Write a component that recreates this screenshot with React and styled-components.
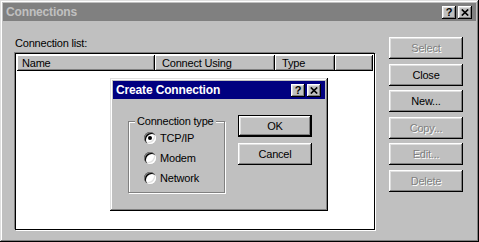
import styled, { createGlobalStyle } from 'styled-components';

const GlobalStyle = createGlobalStyle`
  html, body {
    margin: 0;
    padding: 0;
  }
  body {
    font-family: "Liberation Sans", Arial, sans-serif;
    font-size: 11px;
    letter-spacing: -0.2px;
    color: #000;
    background: #c0c0c0;
  }
`;

const raisedEdge = `
  box-shadow: inset -1px -1px 0 #000, inset 1px 1px 0 #fff,
    inset -2px -2px 0 #808080, inset 2px 2px 0 #dfdfdf;
`;

const Window = styled.div`
  position: relative;
  box-sizing: border-box;
  width: 479px;
  height: 242px;
  padding: 3px;
  display: flex;
  flex-direction: column;
  background: #c0c0c0;
  box-shadow: inset -1px -1px 0 #000, inset 1px 1px 0 #dfdfdf,
    inset -2px -2px 0 #808080, inset 2px 2px 0 #fff;
`;

const Dialog = styled(Window)`
  position: absolute;
  left: 110px;
  top: 78px;
  width: 218px;
  height: 133px;
`;

const TitleBar = styled.div`
  flex-shrink: 0;
  height: 18px;
  display: flex;
  align-items: center;
  justify-content: space-between;
  padding: 0 4px 0 3px;
  background: ${(p) => (p.$active ? '#000080' : '#808080')};
  color: ${(p) => (p.$active ? '#fff' : '#c0c0c0')};
  font-size: 12px;
  font-weight: bold;
  letter-spacing: -0.15px;
`;

const CaptionButtons = styled.div`
  display: flex;
  gap: 2px;
`;

const CaptionButton = styled.div`
  box-sizing: border-box;
  width: 14px;
  height: 13px;
  display: flex;
  align-items: center;
  justify-content: center;
  background: #c0c0c0;
  color: #000;
  font-size: 11px;
  font-weight: bold;
  letter-spacing: 0;
  ${raisedEdge}
`;

const Body = styled.div`
  flex: 1;
  display: flex;
  padding: 16px 0 9px 12px;
`;

const ListColumn = styled.div`
  width: 360px;
  display: flex;
  flex-direction: column;
`;

const Label = styled.div`
  height: 12px;
  line-height: 12px;
  margin-bottom: 4px;
`;

const ListBox = styled.div`
  flex: 1;
  box-sizing: border-box;
  padding: 1px;
  background: #fff;
  border: 1px solid #000;
  box-shadow: -1px -1px 0 #808080, 1px 1px 0 #fff;
`;

const HeaderRow = styled.div`
  display: flex;
  height: 16px;
`;

const HeaderCell = styled.div`
  box-sizing: border-box;
  width: ${(p) => (p.$width ? `${p.$width}px` : 'auto')};
  flex: ${(p) => (p.$width ? '0 0 auto' : '1')};
  padding-left: ${(p) => p.$pad}px;
  line-height: 16px;
  background: #c0c0c0;
  white-space: nowrap;
  box-shadow: inset -1px -1px 0 #000, inset 1px 1px 0 #fff, inset -2px -2px 0 #808080;
`;

const ButtonColumn = styled.div`
  display: flex;
  flex-direction: column;
  gap: ${(p) => p.$gap}px;
  margin-left: ${(p) => p.$offset}px;
`;

const Button = styled.button`
  box-sizing: border-box;
  width: 74px;
  height: 22px;
  margin: 0;
  padding: 0;
  font: inherit;
  letter-spacing: inherit;
  background: #c0c0c0;
  color: ${(p) => (p.disabled ? '#808080' : '#000')};
  text-shadow: ${(p) => (p.disabled ? '1px 1px 0 #fff' : 'none')};
  border: ${(p) => (p.$default ? '1px solid #000' : 'none')};
  ${raisedEdge}
`;

const DialogBody = styled.div`
  flex: 1;
  display: flex;
  align-items: flex-start;
  gap: 13px;
  padding: 16px 13px 0 15px;
`;

const GroupBox = styled.fieldset`
  box-sizing: border-box;
  width: 97px;
  height: 78px;
  margin: 0;
  padding: 0;
  border: 1px solid #808080;
  box-shadow: inset 1px 1px 0 #fff, 1px 1px 0 #fff;
`;

const GroupLegend = styled.legend`
  margin-left: 6px;
  padding: 0 2px;
  line-height: 13px;
  background: #c0c0c0;
`;

const RadioRow = styled.label`
  display: flex;
  align-items: center;
  gap: 4px;
  height: 20px;
  padding-left: 15px;
`;

const RadioMark = styled.span`
  position: relative;
  width: 12px;
  height: 12px;
  border-radius: 50%;
  background: #fff;
  box-shadow: inset 1px 1px 0 #808080, inset 2px 2px 0 #000,
    inset -1px -1px 0 #fff, inset -2px -2px 0 #dfdfdf;

  &::after {
    content: '';
    display: ${(p) => (p.$checked ? 'block' : 'none')};
    position: absolute;
    left: 4px;
    top: 4px;
    width: 4px;
    height: 4px;
    border-radius: 50%;
    background: #000;
  }
`;

function CloseGlyph() {
  return (
    <svg width="8" height="7" viewBox="0 0 8 7">
      <path d="M0.8 0.5 L7.2 6.5 M7.2 0.5 L0.8 6.5" stroke="#000" strokeWidth="1.7" />
    </svg>
  );
}

function Caption({ title, active }) {
  return (
    <TitleBar $active={active}>
      <span>{title}</span>
      <CaptionButtons>
        <CaptionButton>?</CaptionButton>
        <CaptionButton>
          <CloseGlyph />
        </CaptionButton>
      </CaptionButtons>
    </TitleBar>
  );
}

const sideButtons = [
  { label: 'Select', disabled: true },
  { label: 'Close' },
  { label: 'New...' },
  { label: 'Copy...', disabled: true },
  { label: 'Edit...', disabled: true },
  { label: 'Delete', disabled: true },
];

const connectionTypes = [
  { label: 'TCP/IP', checked: true },
  { label: 'Modem' },
  { label: 'Network' },
];

export default function App() {
  return (
    <>
      <GlobalStyle />
      <Window>
        <Caption title="Connections" />
        <Body>
          <ListColumn>
            <Label>Connection list:</Label>
            <ListBox>
              <HeaderRow>
                <HeaderCell $width={138} $pad={5}>Name</HeaderCell>
                <HeaderCell $width={120} $pad={7}>Connect Using</HeaderCell>
                <HeaderCell $width={60} $pad={7}>Type</HeaderCell>
                <HeaderCell />
              </HeaderRow>
            </ListBox>
          </ListColumn>
          <ButtonColumn $gap={4.6} $offset={14}>
            {sideButtons.map((b) => (
              <Button key={b.label} disabled={b.disabled}>
                {b.label}
              </Button>
            ))}
          </ButtonColumn>
        </Body>

        <Dialog>
          <Caption title="Create Connection" active />
          <DialogBody>
            <GroupBox>
              <GroupLegend>Connection type</GroupLegend>
              {connectionTypes.map((t) => (
                <RadioRow key={t.label}>
                  <RadioMark $checked={t.checked} />
                  {t.label}
                </RadioRow>
              ))}
            </GroupBox>
            <ButtonColumn $gap={6} $offset={0}>
              <Button $default>OK</Button>
              <Button>Cancel</Button>
            </ButtonColumn>
          </DialogBody>
        </Dialog>
      </Window>
    </>
  );
}
